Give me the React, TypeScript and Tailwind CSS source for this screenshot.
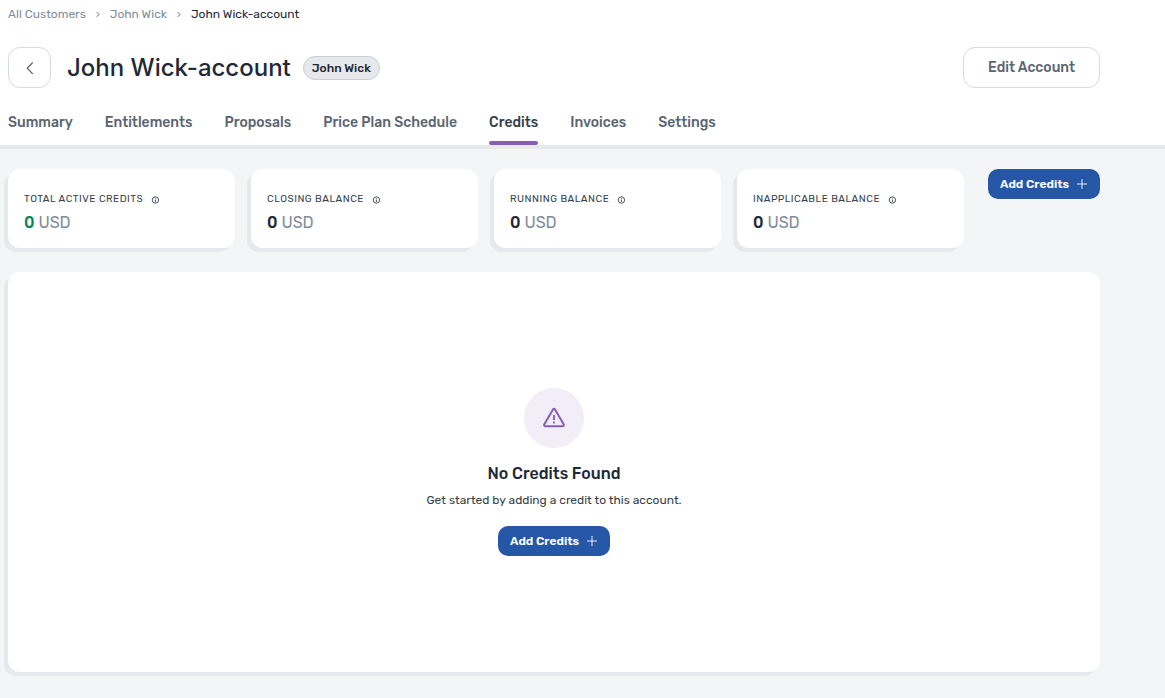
import React from "react";

const tabs = ["Summary", "Entitlements", "Proposals", "Price Plan Schedule", "Credits", "Invoices", "Settings"];

const balances = [
  { label: "TOTAL ACTIVE CREDITS", amount: "0", active: true },
  { label: "CLOSING BALANCE", amount: "0", active: false },
  { label: "RUNNING BALANCE", amount: "0", active: false },
  { label: "INAPPLICABLE BALANCE", amount: "0", active: false },
];

function CrumbArrow() {
  return (
    <svg className="h-2 w-2 shrink-0" viewBox="0 0 8 8" fill="none" stroke="#5c6670" strokeWidth="1" aria-hidden="true">
      <path d="M2.8 2.2 5 4.5 2.8 6.8" />
    </svg>
  );
}

function InfoIcon() {
  return (
    <svg className="mt-px h-2 w-2 shrink-0" viewBox="0 0 8 8" fill="none" stroke="#363f4d" aria-hidden="true">
      <circle cx="4.4" cy="4" r="3.2" strokeWidth="0.9" />
      <path d="M4.4 3.5V6M4.4 1.9V2.7" strokeWidth="0.9" />
    </svg>
  );
}

function AddCreditsButton() {
  return (
    <button
      type="button"
      className="flex h-[30px] w-28 shrink-0 items-center justify-between rounded-[10px] bg-[#2657a7] px-3 text-xs font-semibold whitespace-nowrap text-white"
    >
      Add Credits
      <svg className="h-3 w-3 shrink-0" viewBox="0 0 12 12" fill="none" stroke="white" strokeWidth="0.9" aria-hidden="true">
        <path d="M6 1v10M1 6h10" />
      </svg>
    </button>
  );
}

export default function App() {
  return (
    <div className="min-h-screen bg-[#f4f5f7] font-['Rubik','Roboto',sans-serif] text-[#1f2937]">
      <header className="border-b-4 border-[#e7e8eb] bg-white pr-[65px] pl-2">
        <nav aria-label="Breadcrumb" className="flex h-7 items-center gap-2 text-xs">
          <a href="#customers" className="text-[#7f8c9a]">All Customers</a>
          <CrumbArrow />
          <a href="#john-wick" className="text-[#7f8c9a]">John Wick</a>
          <CrumbArrow />
          <span aria-current="page">John Wick-account</span>
        </nav>

        <div className="flex items-center pt-[19px]">
          <button
            type="button"
            aria-label="Back"
            className="flex h-[41px] w-[43px] shrink-0 items-center justify-center rounded-xl border border-[#d5dae0] bg-white"
          >
            <svg className="h-4 w-4" viewBox="0 0 16 16" fill="none" stroke="#4b5563" strokeWidth="1.2" strokeLinecap="round" strokeLinejoin="round" aria-hidden="true">
              <path d="M10.4 2.8 5.2 8.2l5.2 5.4" />
            </svg>
          </button>
          <h1 className="ml-4 font-['Inter',sans-serif] text-2xl font-medium whitespace-nowrap">John Wick-account</h1>
          <span className="ml-3 flex h-6 items-center rounded-full border border-[#cbced4] bg-[#e7e8eb] px-2 text-xs font-medium whitespace-nowrap">
            John Wick
          </span>
          <button
            type="button"
            className="ml-auto h-[41px] rounded-xl border border-[#d5dae0] bg-white px-6 text-sm font-medium whitespace-nowrap text-[#5b6572]"
          >
            Edit Account
          </button>
        </div>

        <nav aria-label="Account sections" className="flex gap-8 pt-[25px] text-sm font-medium whitespace-nowrap text-[#5b6572]">
          {tabs.map((tab) => (
            <a
              key={tab}
              href={`#${tab.toLowerCase().replace(/ /g, "-")}`}
              aria-current={tab === "Credits" ? "page" : undefined}
              className={tab === "Credits" ? "flex flex-col text-[#363f48]" : "flex flex-col"}
            >
              {tab}
              <span className={tab === "Credits" ? "mt-2 h-1 rounded-sm bg-[#8a5cb8]" : "mt-2 h-1"} />
            </a>
          ))}
        </nav>
      </header>

      <main className="pt-5 pr-[65px] pb-6 pl-2">
        <div className="flex items-start gap-6">
          <div className="grid flex-1 grid-cols-4 gap-4">
            {balances.map((b) => (
              <section key={b.label} className="rounded-xl bg-white px-4 pt-[22px] pb-[13px] shadow-[-4px_4px_0_#e7e8eb]">
                <h2 className="flex items-center gap-2 text-[10px] leading-4 tracking-wider whitespace-nowrap text-[#363f4d]">
                  {b.label}
                  <InfoIcon />
                </h2>
                <p className="mt-1 text-base text-[#7f8c9a]">
                  <span className={b.active ? "font-medium text-[#05875b]" : "font-medium text-[#1f2937]"}>{b.amount}</span> USD
                </p>
              </section>
            ))}
          </div>
          <AddCreditsButton />
        </div>

        <section className="mt-6 flex min-h-[400px] flex-col items-center justify-center rounded-xl bg-white shadow-[-4px_4px_0_#e7e8eb]">
          <div className="flex h-15 w-15 items-center justify-center rounded-full bg-[#f2eef7]">
            <svg className="h-6 w-6" viewBox="0 0 24 24" fill="none" stroke="#8a5cb8" strokeWidth="2" strokeLinejoin="round" aria-hidden="true">
              <path d="M11 3.4 2.2 18.4a1.2 1.2 0 0 0 1 1.8h17.6a1.2 1.2 0 0 0 1-1.8L13 3.4a1.2 1.2 0 0 0-2 0Z" />
              <path d="M12 9v5M12 15.5v2" strokeWidth="1.8" />
            </svg>
          </div>
          <h2 className="mt-[14px] text-base font-medium">No Credits Found</h2>
          <p className="mt-1 mb-4 text-xs leading-5 text-[#363f48]">Get started by adding a credit to this account.</p>
          <AddCreditsButton />
        </section>
      </main>
    </div>
  );
}
